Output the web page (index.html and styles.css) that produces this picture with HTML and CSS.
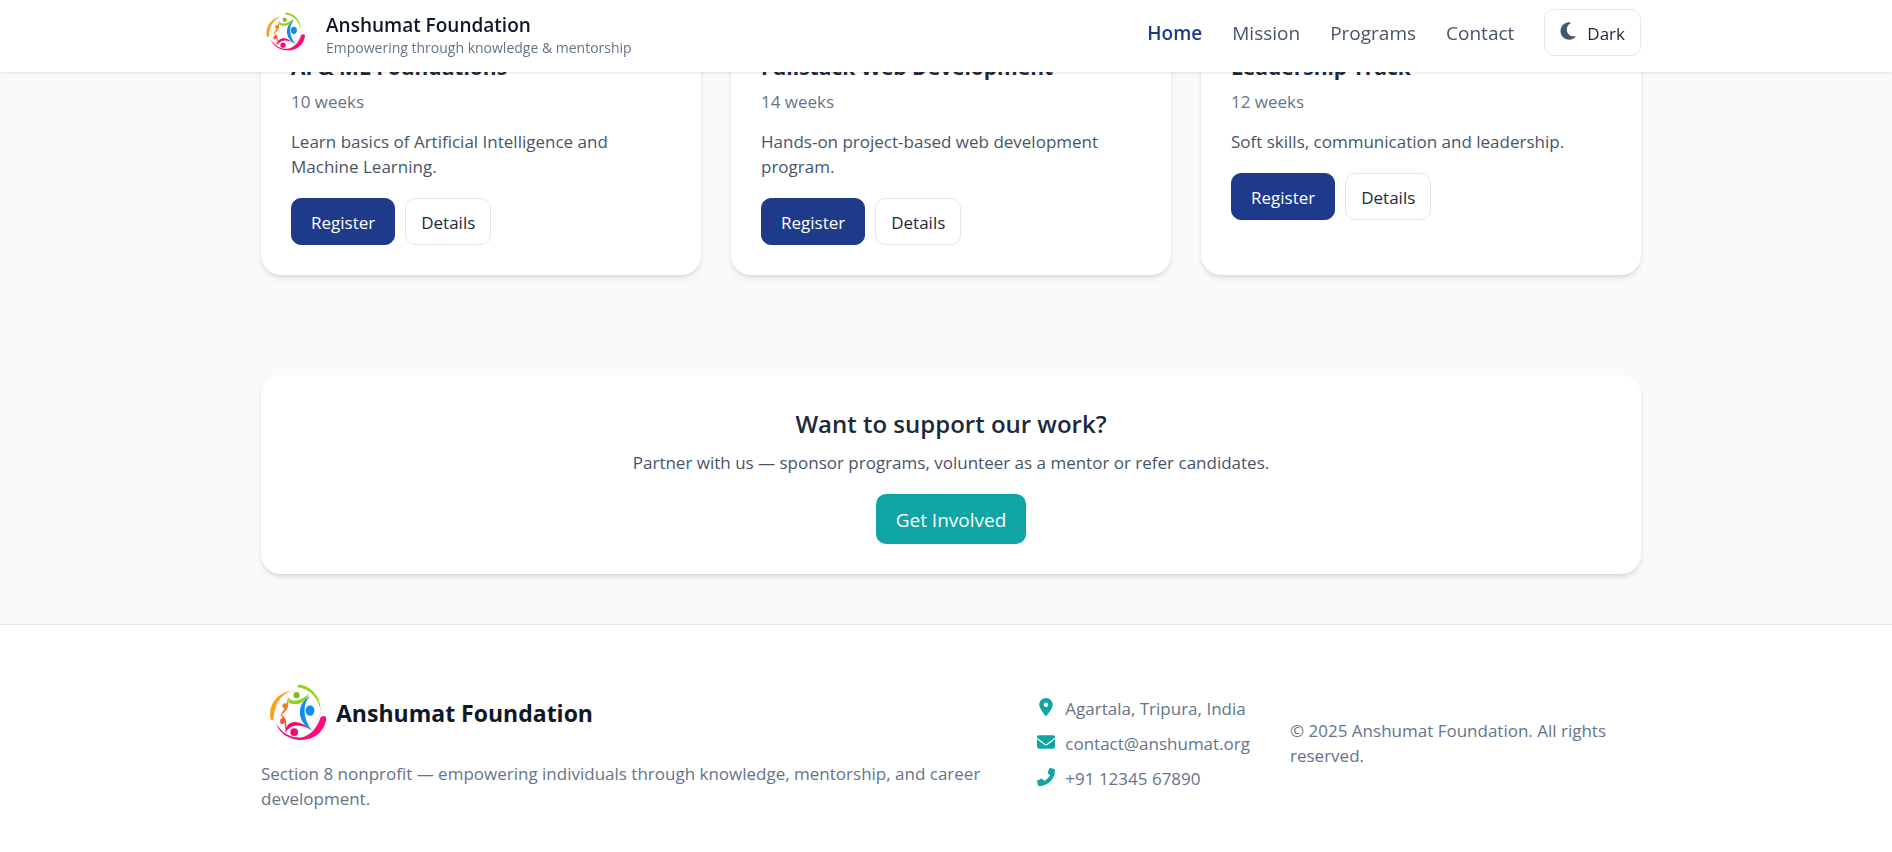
FILE: index.html
```html
<!DOCTYPE html>
<html lang="en">
<head>
<meta charset="utf-8">
<meta name="viewport" content="width=device-width, initial-scale=1">
<title>Anshumat Foundation</title>
<link rel="stylesheet" href="styles.css">
</head>
<body>
<svg class="sprite" aria-hidden="true">
  <symbol id="logo" viewBox="0 0 60 60">
    <path d="M2 36C-1 22 8 9 23 6C12 11 6 20 5 36Q3 38 2 36Z" fill="#f9a01b"/>
    <path d="M30 1Q30 0 32 0C45 2 54 13 54 27C52 15 44 5 31 3Q30 3 30 1Z" fill="#8fd61c"/>
    <path d="M54 34Q59 31 60 35C58 51 44 60 28 57C17 55 10 48 8 41C14 51 24 56 34 55C44 53 51 44 54 34Z" fill="#ff0a78"/>
    <path d="M7 22C13 10 25 4 37 7M54 24C54 34 50 42 44 47" fill="none" stroke="#f6cfc0" stroke-width="0.600"/>
    <circle cx="29" cy="11" r="3.200" fill="#7cb82a"/>
    <path d="M20 12C23 19 33 18 42 9C38 20 30 22 21 19Z" fill="#8fd61c"/>
    <ellipse cx="43" cy="27" rx="4.600" ry="5.500" fill="#108bf5"/>
    <path d="M44 11C35 19 35 34 45 48C30 39 27 21 44 11Z" fill="#108bf5"/>
    <circle cx="26.500" cy="49.500" r="4" fill="#f5086f"/>
    <path d="M17 50C18 36 32 36 42 46C30 40 23 42 17 50Z" fill="#f5086f"/>
    <circle cx="17" cy="22" r="2.700" fill="#f47c20"/>
    <path d="M20 14C22 24 18 29 12 32C14 28 18 25 20 14Z" fill="#f47c20"/>
    <ellipse cx="14" cy="38" rx="2" ry="3" fill="#f0522a"/>
    <path d="M12 31C20 34 19 42 17 49C17 41 17 37 12 31Z" fill="#f0522a"/>
  </symbol>
</svg>

<header class="topbar">
  <div class="container topbar-row">
    <a class="brand" href="#home">
      <svg class="brand-logo" viewBox="-7 -5 76 72" role="img" aria-label="Anshumat Foundation logo"><use href="#logo" width="60" height="60"/></svg>
      <span class="brand-text">
        <span class="brand-name">Anshumat Foundation</span>
        <span class="brand-tag">Empowering through knowledge &amp; mentorship</span>
      </span>
    </a>
    <nav class="nav" aria-label="Main">
      <a class="nav-link active" href="#home">Home</a>
      <a class="nav-link" href="#mission">Mission</a>
      <a class="nav-link" href="#programs">Programs</a>
      <a class="nav-link" href="#contact">Contact</a>
      <button class="theme-toggle" type="button">
        <svg class="icon-moon" viewBox="0 0 384 512" aria-hidden="true"><path d="M223.500 32C100 32 0 132.300 0 256S100 480 223.500 480c60.600 0 115.500-24.200 155.800-63.400c5-4.900 6.300-12.500 3.100-18.700s-10.100-9.700-17-8.500c-9.800 1.700-19.800 2.600-30.100 2.600c-96.900 0-175.500-78.800-175.500-176c0-65.800 36-123.100 89.300-153.300c6.100-3.500 9.200-10.500 7.700-17.300s-7.300-11.900-14.300-12.500c-6.300-.5-12.600-.8-19-.8z"/></svg>
        Dark
      </button>
    </nav>
  </div>
</header>

<main class="page">
  <section class="container programs" id="programs">
    <article class="card program">
      <h3 class="program-title">AI &amp; ML Foundations</h3>
      <p class="program-length">10 weeks</p>
      <p class="program-about">Learn basics of Artificial Intelligence and Machine Learning.</p>
      <div class="actions">
        <button class="btn btn-primary" type="button">Register</button>
        <button class="btn btn-outline" type="button">Details</button>
      </div>
    </article>
    <article class="card program">
      <h3 class="program-title">Fullstack Web Development</h3>
      <p class="program-length">14 weeks</p>
      <p class="program-about">Hands-on project-based web development program.</p>
      <div class="actions">
        <button class="btn btn-primary" type="button">Register</button>
        <button class="btn btn-outline" type="button">Details</button>
      </div>
    </article>
    <article class="card program">
      <h3 class="program-title">Leadership Track</h3>
      <p class="program-length">12 weeks</p>
      <p class="program-about">Soft skills, communication and leadership.</p>
      <div class="actions">
        <button class="btn btn-primary" type="button">Register</button>
        <button class="btn btn-outline" type="button">Details</button>
      </div>
    </article>
  </section>

  <section class="container support">
    <div class="card support-card">
      <h3 class="support-title">Want to support our work?</h3>
      <p class="support-about">Partner with us — sponsor programs, volunteer as a mentor or refer candidates.</p>
      <a class="btn-accent" href="#contact">Get Involved</a>
    </div>
  </section>
</main>

<footer class="footer" id="contact">
  <div class="container footer-row">
    <div class="footer-about">
      <div class="footer-brand">
        <svg class="footer-logo" viewBox="-8 -10 78 78" role="img" aria-label="Anshumat Foundation logo"><use href="#logo" width="60" height="60"/></svg>
        <h4 class="footer-name">Anshumat Foundation</h4>
      </div>
      <p class="footer-text">Section 8 nonprofit — empowering individuals through knowledge, mentorship, and career development.</p>
    </div>
    <ul class="contacts">
      <li class="contact"><svg class="icon" viewBox="-64 0 512 512" aria-hidden="true"><path d="M215.700 499.200C267 435 384 279.400 384 192C384 86 298 0 192 0S0 86 0 192c0 87.400 117 243 168.300 307.200c12.300 15.300 35.100 15.300 47.400 0zM192 128a64 64 0 1 1 0 128 64 64 0 1 1 0-128z"/></svg>Agartala, Tripura, India</li>
      <li class="contact"><svg class="icon" viewBox="0 0 512 512" aria-hidden="true"><path d="M48 64C21.500 64 0 85.500 0 112c0 15.100 7.100 29.300 19.200 38.400L236.800 313.600c11.400 8.500 27 8.500 38.400 0L492.800 150.400c12.100-9.100 19.200-23.300 19.200-38.400c0-26.500-21.500-48-48-48H48zM0 176V384c0 35.300 28.700 64 64 64H448c35.300 0 64-28.700 64-64V176L294.400 339.200c-22.800 17.100-54 17.100-76.800 0L0 176z"/></svg>contact@anshumat.org</li>
      <li class="contact"><svg class="icon" viewBox="0 0 512 512" aria-hidden="true"><path d="M347.100 24.600c7.700-18.600 28-28.500 47.400-23.200l88 24C499.900 30.200 512 46 512 64c0 247.400-200.600 448-448 448c-18 0-33.800-12.100-38.600-29.500l-24-88c-5.300-19.400 4.600-39.700 23.200-47.400l96-40c16.300-6.800 35.200-2.100 46.300 11.600L207.300 368c70.400-33.300 127.400-90.300 160.700-160.700L318.700 167c-13.700-11.200-18.400-30-11.600-46.300l40-96z"/></svg>+91 12345 67890</li>
    </ul>
    <p class="footer-text copyright">© 2025 Anshumat Foundation. All rights reserved.</p>
  </div>
</footer>
</body>
</html>
```

FILE: styles.css
```css
* {
  box-sizing: border-box;
}

body {
  margin: 0;
  min-height: 100vh;
  display: flex;
  flex-direction: column;
  background: #f8fafc;
  color: #1e293b;
  font-family: "Open Sans", "Noto Sans", sans-serif;
  font-size: 17px;
  line-height: 25px;
}

h3, h4, p, ul {
  margin: 0;
  padding: 0;
}

button {
  font: inherit;
  cursor: pointer;
}

a {
  text-decoration: none;
}

.sprite {
  position: absolute;
  width: 0;
  height: 0;
}

.container {
  width: 100%;
  max-width: 1440px;
  margin: 0 auto;
  padding: 0 30px;
}

.topbar,
.page,
.footer {
  padding-left: 10px;
}

.topbar {
  position: fixed;
  top: 0;
  left: 0;
  right: 0;
  z-index: 10;
  background: #fff;
  box-shadow: 0 1px 3px rgba(0, 0, 0, 0.1);
}

.topbar-row {
  display: flex;
  align-items: center;
  justify-content: space-between;
  min-height: 72px;
  padding-bottom: 7px;
}

.brand {
  display: flex;
  align-items: center;
  gap: 15px;
}

.brand-logo {
  width: 50px;
  height: 50px;
}

.brand-text {
  display: flex;
  flex-direction: column;
  padding-top: 5px;
}

.brand-name {
  font-size: 19px;
  font-weight: 600;
  line-height: 25px;
  color: #0f172a;
}

.brand-tag {
  font-size: 14px;
  line-height: 20px;
  color: #64748b;
}

.nav {
  display: flex;
  align-items: center;
  gap: 30px;
}

.nav-link {
  padding-top: 2px;
  font-size: 19px;
  color: #475569;
}

.nav-link.active {
  font-weight: 600;
  color: #1e3a8a;
}

.theme-toggle {
  display: flex;
  align-items: flex-start;
  gap: 11px;
  padding: 11px 15px 9px;
  border: 1px solid #e5e7eb;
  border-radius: 10px;
  background: #fff;
  color: #1e293b;
}

.icon-moon {
  width: 16px;
  height: 20px;
  fill: #475569;
}

.card {
  background: #fff;
  border-radius: 20px;
  box-shadow: 0 4px 6px -1px rgba(0, 0, 0, 0.1), 0 2px 4px -2px rgba(0, 0, 0, 0.1);
}

.programs {
  display: grid;
  grid-template-columns: repeat(3, 1fr);
  gap: 30px;
  padding-top: 20px;
}

.program {
  padding: 30px;
}

.program-title {
  font-size: 21px;
  font-weight: 700;
  line-height: 35px;
}

.program-length {
  margin-top: 4px;
  color: #64748b;
}

.program-about {
  margin-top: 15px;
  color: #475569;
}

.actions {
  display: flex;
  gap: 10px;
  margin-top: 19px;
}

.btn {
  padding: 11px 15px 9px;
  border: 1px solid #e5e7eb;
  border-radius: 10px;
  background: #fff;
  color: #1e293b;
}

.btn-primary {
  padding: 11px 19px 9px;
  border-color: #1e3a8a;
  background: #1e3a8a;
  color: #fff;
}

.support {
  padding-top: 100px;
  padding-bottom: 50px;
}

.support-card {
  display: flex;
  flex-direction: column;
  align-items: center;
  padding: 30px;
  text-align: center;
}

.support-title {
  font-size: 24px;
  font-weight: 600;
  line-height: 37px;
}

.support-about {
  margin-top: 8px;
  color: #475569;
}

.btn-accent {
  margin-top: 19px;
  padding: 11px 20px 9px;
  border-radius: 10px;
  background: #0ea5a4;
  color: #fff;
  font-size: 19px;
  line-height: 30px;
}

.footer {
  flex: 1;
  border-top: 1px solid #e5e7eb;
  background: #fff;
}

.footer-row {
  display: flex;
  align-items: center;
  gap: 40px;
  padding-top: 50px;
  padding-bottom: 38px;
}

.footer-about {
  flex: 1 1 0;
}

.footer-brand {
  display: flex;
  align-items: center;
}

.footer-logo {
  width: 75px;
  height: 75px;
}

.footer-name {
  padding-top: 2px;
  font-size: 23px;
  font-weight: 700;
  line-height: 35px;
  color: #0f172a;
}

.footer-text {
  color: #64748b;
}

.footer-about .footer-text {
  margin-top: 11px;
}

.contacts {
  display: flex;
  flex-direction: column;
  gap: 10px;
  list-style: none;
  color: #64748b;
}

.contact {
  display: flex;
  align-items: flex-start;
  gap: 10px;
}

.icon {
  width: 18px;
  height: 18px;
  margin-top: 2px;
  fill: #0ea5a4;
}

.copyright {
  flex: 0 0 351px;
}
```
